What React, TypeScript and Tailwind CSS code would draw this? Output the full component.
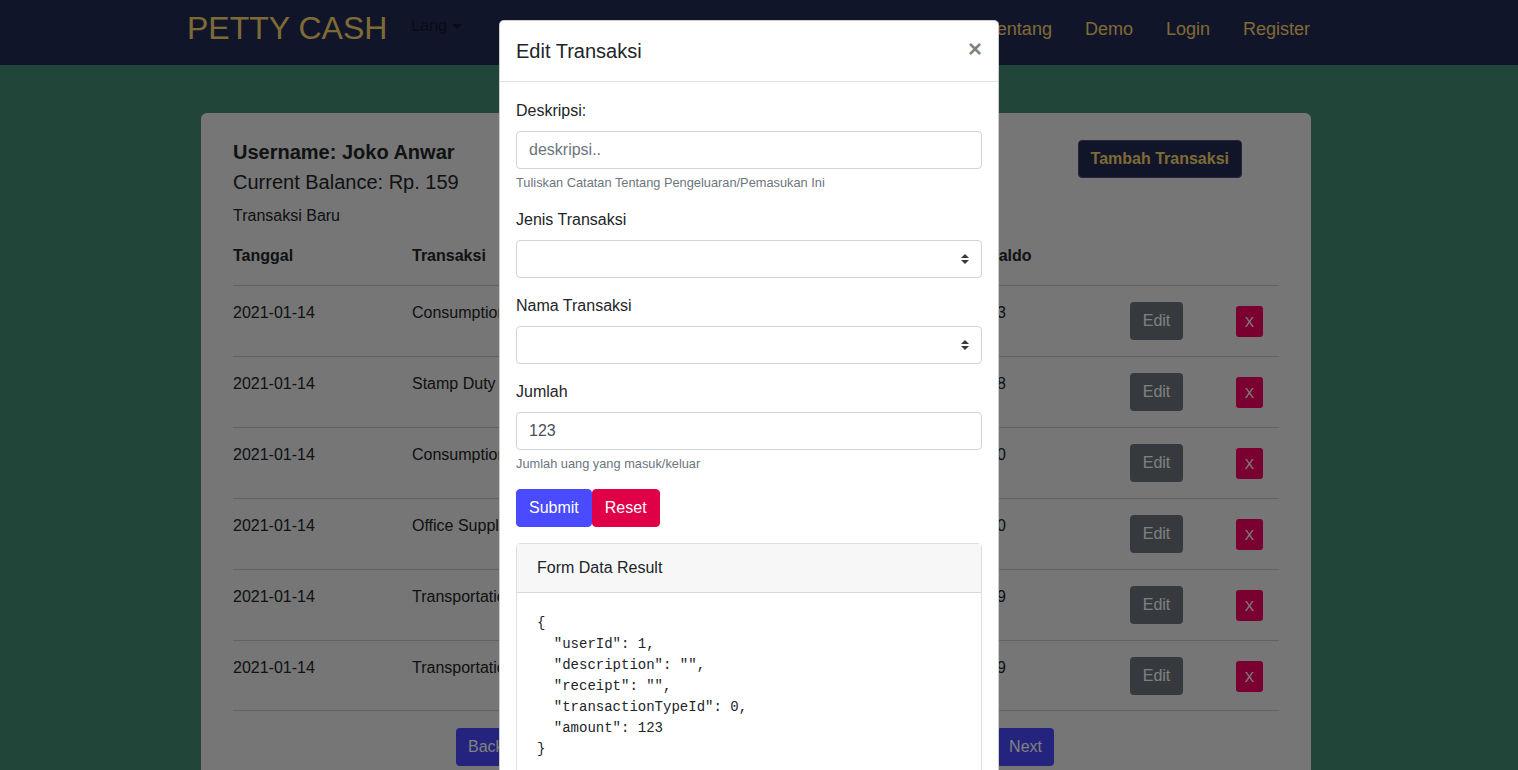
import React from "react";

interface Row {
  tanggal: string;
  transaksi: string;
  saldo: string;
}

const ROWS: Row[] = [
  { tanggal: "2021-01-14", transaksi: "Consumption", saldo: "23" },
  { tanggal: "2021-01-14", transaksi: "Stamp Duty", saldo: "18" },
  { tanggal: "2021-01-14", transaksi: "Consumption", saldo: "30" },
  { tanggal: "2021-01-14", transaksi: "Office Supplies", saldo: "40" },
  { tanggal: "2021-01-14", transaksi: "Transportation", saldo: "59" },
  { tanggal: "2021-01-14", transaksi: "Transportation", saldo: "59" },
];

// kolom: tanggal, transaksi, (tertutup modal), saldo, edit, hapus
const COLS = "grid grid-cols-[179px_87px_489px_142px_106px_1fr]";

const JSON_TEXT = `{
  "userId": 1,
  "description": "",
  "receipt": "",
  "transactionTypeId": 0,
  "amount": 123
}`;

function SelectCaret() {
  return (
    <svg width="8" height="10" viewBox="0 0 4 5" className="text-[#343a40]">
      <path fill="currentColor" d="M2 0L0 2h4zm0 5L0 3h4z" />
    </svg>
  );
}

function FakeSelect() {
  return (
    <div className="h-[38px] border border-[#ced4da] rounded-[4px] bg-white flex items-center justify-end pr-[12px]">
      <SelectCaret />
    </div>
  );
}

export default function App() {
  return (
    <div className="relative h-[770px] overflow-hidden bg-[#448a72] font-['Liberation_Sans',Arial,sans-serif] text-[#212529]">
      {/* navbar */}
      <nav className="h-[65px] bg-[#202a54] flex items-start">
        <div className="ml-[187px] mt-[12px] text-[32px] leading-[32px] text-[#fcd56a]">PETTY CASH</div>
        <div className="ml-[24px] mt-[14px] flex items-center text-[16px] leading-[24px] text-black/50">
          Lang
          <span className="ml-[5px] w-0 h-0 border-l-[5px] border-r-[5px] border-t-[5px] border-l-transparent border-r-transparent border-t-black/50" />
        </div>
        <div className="ml-auto mr-[208px] mt-[16px] flex gap-[33px] text-[18px] leading-[27px] text-[#fcd56a]">
          <span>Tentang</span>
          <span>Demo</span>
          <span>Login</span>
          <span>Register</span>
        </div>
      </nav>

      {/* page */}
      <main className="pt-[48px] pl-[201px]">
        <div className="w-[1110px] bg-[#ececec] rounded-[6px] px-[32px] pt-[24px] pb-[40px]">
          <div className="flex items-start">
            <div>
              <div className="text-[20px] leading-[30px] font-bold">Username: Joko Anwar</div>
              <div className="text-[20px] leading-[30px]">Current Balance: Rp. 159</div>
              <div className="mt-[7px] text-[16px] leading-[24px]">Transaksi Baru</div>
            </div>
            <button className="ml-auto mr-[37px] mt-[3px] h-[38px] px-[12px] rounded-[4px] bg-[#202a54] border border-[#4a5070] text-[16px] font-bold text-[#fcd56a]">
              Tambah Transaksi
            </button>
          </div>

          <div className={`${COLS} mt-[4px] h-[53px] pt-[12px] text-[16px] leading-[24px] font-bold`}>
            <div>Tanggal</div>
            <div>Transaksi</div>
            <div />
            <div>Saldo</div>
            <div />
            <div />
          </div>

          {ROWS.map((r, i) => (
            <div
              key={i}
              className={`${COLS} h-[71px] border-t border-[#c4c4c4] text-[16px] leading-[24px] ${i === ROWS.length - 1 ? "border-b" : ""}`}
            >
              <div className="pt-[15px]">{r.tanggal}</div>
              <div className="pt-[15px] whitespace-nowrap">{r.transaksi}</div>
              <div />
              <div className="pt-[15px]">{r.saldo}</div>
              <div className="pt-[16px]">
                <button className="h-[38px] w-[53px] rounded-[4px] bg-[#6c757d] text-white text-[16px]">Edit</button>
              </div>
              <div className="pt-[20px]">
                <button className="h-[31px] w-[27px] rounded-[3px] bg-[#f20060] text-white text-[14px]">X</button>
              </div>
            </div>
          ))}

          <div className="mt-[17px] ml-[223px] w-[598px] flex justify-between">
            <button className="h-[38px] px-[12px] rounded-[4px] bg-[#4848fe] text-white text-[16px]">Back</button>
            <button className="h-[38px] px-[12px] rounded-[4px] bg-[#4848fe] text-white text-[16px]">Next</button>
          </div>
        </div>
      </main>

      {/* backdrop */}
      <div className="absolute inset-0 bg-black/50" />

      {/* modal */}
      <div className="absolute left-[499px] top-[20px] w-[500px] bg-white rounded-[5px] border border-black/20">
        <div className="h-[61px] px-[16px] flex items-center justify-between border-b border-[#dee2e6]">
          <div className="text-[20px] leading-[30px]">Edit Transaksi</div>
          <div className="text-[24px] leading-none font-bold text-black/50 -mt-[5px]">×</div>
        </div>
        <div className="px-[16px] pt-[17px] pb-[16px]">
          <div className="mb-[16px]">
            <div className="text-[16px] leading-[24px] mb-[8px]">Deskripsi:</div>
            <div className="h-[38px] border border-[#ced4da] rounded-[4px] px-[12px] flex items-center text-[16px] text-[#6c757d]">
              deskripsi..
            </div>
            <div className="mt-[4px] text-[12.8px] leading-[19.2px] text-[#6c757d]">
              Tuliskan Catatan Tentang Pengeluaran/Pemasukan Ini
            </div>
          </div>
          <div className="mb-[16px]">
            <div className="text-[16px] leading-[24px] mb-[8px]">Jenis Transaksi</div>
            <FakeSelect />
          </div>
          <div className="mb-[16px]">
            <div className="text-[16px] leading-[24px] mb-[8px]">Nama Transaksi</div>
            <FakeSelect />
          </div>
          <div className="mb-[16px]">
            <div className="text-[16px] leading-[24px] mb-[8px]">Jumlah</div>
            <div className="h-[38px] border border-[#ced4da] rounded-[4px] px-[12px] flex items-center text-[16px] text-[#495057]">
              123
            </div>
            <div className="mt-[4px] text-[12.8px] leading-[19.2px] text-[#6c757d]">Jumlah uang yang masuk/keluar</div>
          </div>
          <div className="flex">
            <button className="h-[38px] px-[12px] rounded-[4px] border border-[#4a4aff] bg-[#4a4aff] text-white text-[16px]">Submit</button>
            <button className="h-[38px] px-[12px] rounded-[4px] border border-[#df0048] bg-[#df0048] text-white text-[16px]">Reset</button>
          </div>
          <div className="mt-[16px] border border-black/[0.125] rounded-[4px]">
            <div className="px-[20px] py-[12px] bg-[#f7f7f7] border-b border-black/[0.125] text-[16px] leading-[24px]">
              Form Data Result
            </div>
            <div className="p-[20px]">
              <pre className="font-['Liberation_Mono','Courier_New',monospace] text-[14px] leading-[21px] text-[#212529]">{JSON_TEXT}</pre>
            </div>
          </div>
        </div>
      </div>
    </div>
  );
}
